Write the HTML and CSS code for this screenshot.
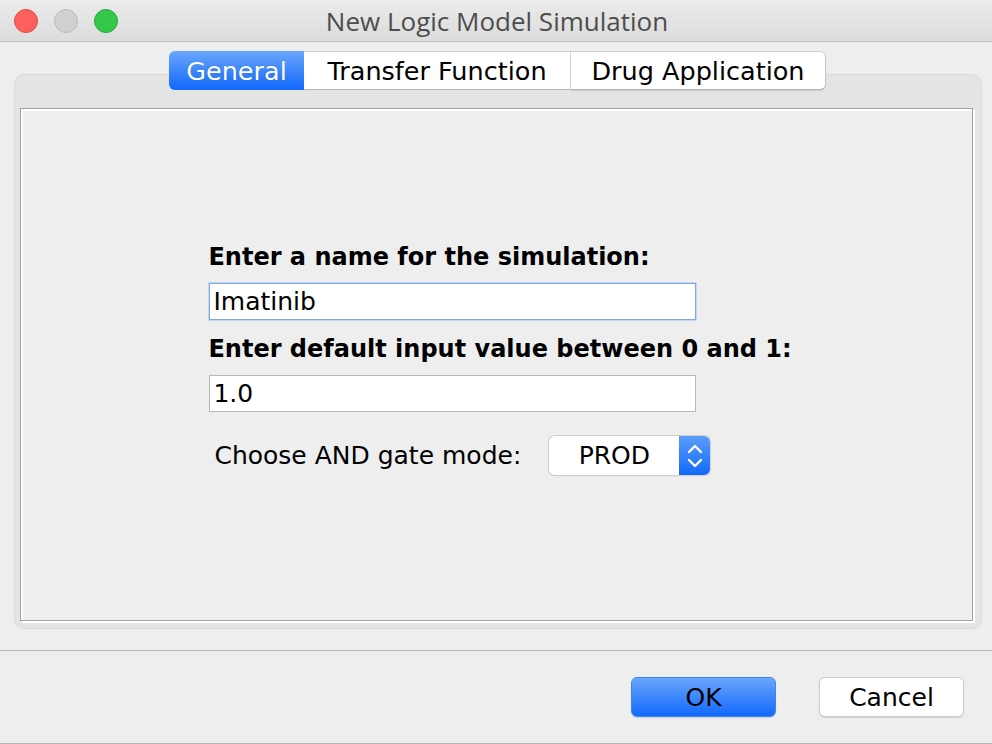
FILE: index.html
```html
<!DOCTYPE html>
<html>
<head>
<meta charset="utf-8">
<link rel="stylesheet" href="styles.css">
</head>
<body>
<div class="window">
  <div class="titlebar">
    <div class="lights">
      <span class="light red"></span>
      <span class="light gray"></span>
      <span class="light green"></span>
    </div>
    <div class="title">New Logic Model Simulation</div>
  </div>
  <div class="main">
    <div class="pane">
      <div class="tabs">
        <div class="tab active">General</div>
        <div class="tab">Transfer Function</div>
        <div class="tab">Drug Application</div>
      </div>
      <div class="panel">
        <div class="form">
          <div class="label">Enter a name for the simulation:</div>
          <div class="field focused">Imatinib</div>
          <div class="label second">Enter default input value between 0 and 1:</div>
          <div class="field">1.0</div>
          <div class="row">
            <span class="row-label">Choose AND gate mode:</span>
            <div class="combo">
              <span class="combo-value">PROD</span>
              <span class="combo-arrow">
                <svg width="18" height="26" viewBox="0 0 18 26">
                  <path d="M3 9 L9 3 L15 9" fill="none" stroke="#fff" stroke-width="2.4" stroke-linecap="round" stroke-linejoin="round"/>
                  <path d="M3 17 L9 23 L15 17" fill="none" stroke="#fff" stroke-width="2.4" stroke-linecap="round" stroke-linejoin="round"/>
                </svg>
              </span>
            </div>
          </div>
        </div>
      </div>
    </div>
  </div>
  <div class="footer">
    <div class="btn primary">OK</div>
    <div class="btn">Cancel</div>
  </div>
</div>
</body>
</html>
```

FILE: styles.css
```css
html, body {
  margin: 0;
  padding: 0;
}
body {
  width: 992px;
  height: 744px;
  overflow: hidden;
  background: #eeeeee;
  font-family: "DejaVu Sans", sans-serif;
}
.window {
  display: flex;
  flex-direction: column;
  height: 744px;
}
.titlebar {
  flex-shrink: 0;
  height: 41px;
  border-bottom: 1px solid #bcbcbc;
  background: linear-gradient(#ebebeb, #dcdcdc);
  display: flex;
  align-items: center;
}
.lights {
  display: flex;
  gap: 16px;
  padding-left: 14px;
}
.light {
  width: 24px;
  height: 24px;
  border-radius: 50%;
  box-sizing: border-box;
}
.light.red { background: #fc605c; border: 1px solid #de4a45; }
.light.gray { background: #d0d0d0; border: 1px solid #bcbcbc; }
.light.green { background: #34c84a; border: 1px solid #27a63a; }
.title {
  flex: 1;
  text-align: center;
  margin-left: -116px;
  font-family: "Open Sans", sans-serif;
  font-size: 26px;
  color: #4d4d4d;
}
.main {
  flex-shrink: 0;
  height: 608px;
  padding-top: 32px;
  box-sizing: border-box;
  display: flex;
  flex-direction: column;
}
.pane {
  margin: 0 10px 21px 14px;
  flex: 1;
  background: #e4e4e4;
  border: 1px solid #dadada;
  border-radius: 10px;
  padding: 0 8px 7px 5px;
  display: flex;
  flex-direction: column;
}
.tabs {
  display: flex;
  justify-content: center;
  margin-top: -24px;
  margin-bottom: 18px;
  margin-left: 2px;
}
.tab {
  height: 39px;
  box-sizing: border-box;
  display: flex;
  align-items: center;
  justify-content: center;
  background: #ffffff;
  font-size: 25.5px;
  color: #000;
  border-top: 1px solid #d0d0d0;
  border-bottom: 1px solid #b4b4b4;
  border-right: 1px solid #d6d6d6;
  white-space: nowrap;
}
.tab:nth-child(2) { width: 267px; }
.tab:nth-child(3) {
  width: 255px;
  border-radius: 0 6px 6px 0;
  border-right: 1px solid #c6c6c6;
  box-shadow: 0 1px 1px rgba(0,0,0,0.12);
}
.tab.active {
  width: 135px;
  background: linear-gradient(#6aa6fc, #1168fb);
  color: #fff;
  border: none;
  border-radius: 6px 0 0 6px;
  text-shadow: 0 0 1px rgba(0,0,0,0.3);
}
.panel {
  flex: 1;
  background: #eeeeee;
  border: 1px solid #a0a0a0;
  box-shadow: inset 2px 2px 0 #ffffff, 2px 2px 0 #ffffff;
  display: flex;
  justify-content: center;
  padding-top: 133px;
  padding-left: 7px;
}
.form {
  display: flex;
  flex-direction: column;
  align-items: flex-start;
}
.label {
  font-weight: bold;
  font-size: 24px;
  line-height: 30px;
  color: #000;
  white-space: nowrap;
}
.label.second {
  margin-top: 14px;
}
.field {
  width: 487px;
  height: 37px;
  box-sizing: border-box;
  margin-top: 11px;
  margin-left: 1px;
  background: #fff;
  border: 1px solid #b9b9b9;
  font-size: 25px;
  line-height: 35px;
  padding-left: 3px;
  color: #000;
}
.field.focused {
  border: 1px solid #7fa8e4;
  box-shadow: 0 0 0 1px #c3d7f4;
}
.row {
  display: flex;
  align-items: center;
  margin-top: 24px;
  margin-left: 6px;
}
.row-label {
  font-size: 25px;
  color: #000;
  white-space: nowrap;
}
.combo {
  margin-left: 28px;
  width: 161px;
  height: 39px;
  border-radius: 6px;
  background: #fff;
  box-shadow: 0 0 0 1px #cfcfcf, 0 1px 1px rgba(0,0,0,0.2);
  display: flex;
  overflow: hidden;
}
.combo-value {
  flex: 1;
  display: flex;
  align-items: center;
  justify-content: center;
  font-size: 25px;
  color: #000;
}
.combo-arrow {
  width: 31px;
  background: linear-gradient(#5b9cfc, #126afb);
  display: flex;
  align-items: center;
  justify-content: center;
}
.footer {
  flex-shrink: 0;
  height: 92px;
  box-sizing: content-box;
  border-top: 1px solid #b6b6b6;
  border-bottom: 1px solid #b6b6b6;
  display: flex;
  justify-content: flex-end;
  align-items: flex-start;
  gap: 43px;
  padding-right: 28px;
}
.btn {
  margin-top: 26px;
  width: 145px;
  height: 40px;
  box-sizing: border-box;
  border-radius: 6px;
  background: #fff;
  border: 1px solid #cbcbcb;
  box-shadow: 0 1px 1px rgba(0,0,0,0.12);
  display: flex;
  align-items: center;
  justify-content: center;
  font-size: 25px;
  color: #000;
}
.btn.primary {
  background: linear-gradient(#6aa6fc, #1168fb);
  border: 1px solid #3d85f5;
}
```
